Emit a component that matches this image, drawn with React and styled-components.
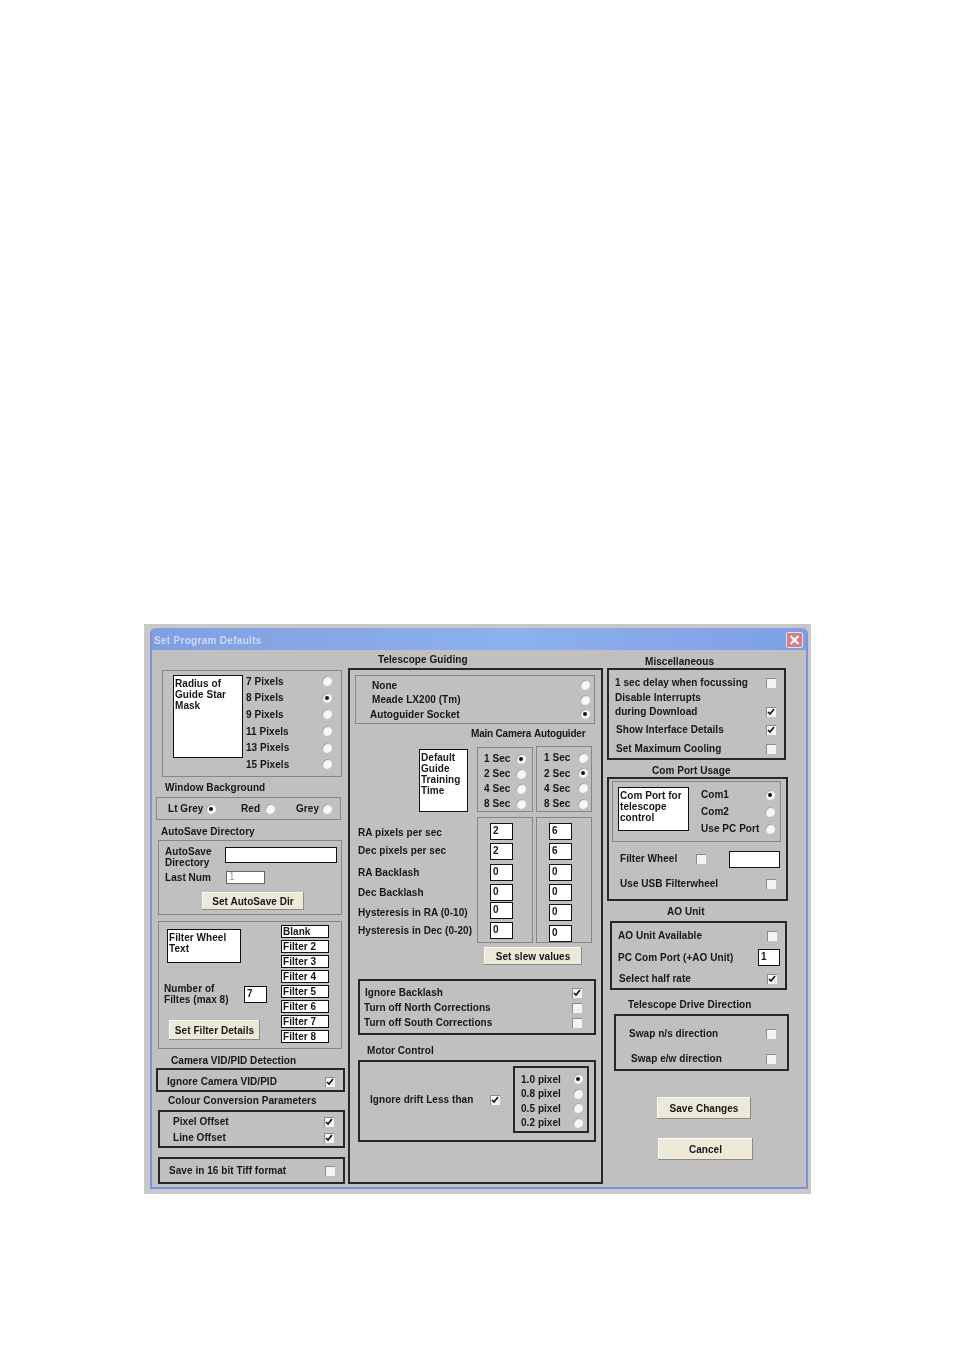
import styled, { createGlobalStyle } from 'styled-components';

const GlobalStyle = createGlobalStyle`
  html, body {
    margin: 0;
    background: #ffffff;
  }
  body {
    font-family: "Liberation Sans", Arial, sans-serif;
    font-size: 10px;
    font-weight: bold;
    letter-spacing: 0.05px;
    color: #161616;
  }
`;

const Page = styled.div`
  padding: 624px 0 157px 144px;
`;

const Window = styled.div`
  width: 667px;
  height: 570px;
  box-sizing: border-box;
  padding: 4px 3px 0 6px;
  background: #c8c8c8;
  filter: blur(0.4px);
`;

const Frame = styled.div`
  width: 658px;
  height: 561px;
  box-sizing: border-box;
  border: 2px solid #7f8fd8;
  border-top: none;
  border-radius: 6px 6px 0 0;
  overflow: hidden;
`;

const TitleBar = styled.div`
  height: 22px;
  display: flex;
  align-items: center;
  justify-content: space-between;
  padding: 2px 3px 0 2px;
  box-sizing: border-box;
  background: linear-gradient(90deg, #7f9fe0, #8fb0ee 55%, #7f9fe4);
  color: #cfd9f2;
  letter-spacing: 0.3px;
`;

const CloseButton = styled.span`
  width: 17px;
  height: 16px;
  display: flex;
  align-items: center;
  justify-content: center;
  background: #cf8088;
  border: 1px solid #e6dfe6;
  border-radius: 2px;
  box-sizing: border-box;
`;

const Body = styled.div`
  height: 537px;
  display: flex;
  padding-left: 4px;
  background: #c0c0c0;
`;

const Column = styled.div`
  width: ${(p) => p.$w}px;
  margin-right: ${(p) => p.$gap || 0}px;
  flex: none;
`;

const Heading = styled.div`
  height: 12px;
  line-height: 14px;
  white-space: nowrap;
  margin: ${(p) => p.$top}px 0 0 ${(p) => p.$left}px;
`;

const Panel = styled.div`
  box-sizing: border-box;
  width: ${(p) => p.$w}px;
  height: ${(p) => p.$h}px;
  margin: ${(p) => p.$top || 0}px 0 0 ${(p) => p.$left || 0}px;
  border: ${(p) => (p.$dark ? '2px solid #262626' : '1px solid #858585')};
  flex: none;
`;

const WhiteBox = styled.div`
  box-sizing: border-box;
  width: ${(p) => p.$w}px;
  height: ${(p) => p.$h}px;
  margin: ${(p) => p.$top || 0}px 0 0 ${(p) => p.$left || 0}px;
  padding: 2px 0 0 1px;
  background: #ffffff;
  border: 1px solid #111111;
  line-height: 11px;
  flex: none;
`;

const Field = styled.div`
  box-sizing: border-box;
  width: ${(p) => p.$w}px;
  height: ${(p) => p.$h}px;
  margin: ${(p) => p.$top || 0}px 0 0 ${(p) => p.$left || 0}px;
  padding-left: 2px;
  background: #ffffff;
  border: 1px solid ${(p) => (p.$soft ? '#666666' : '#111111')};
  color: ${(p) => (p.$soft ? '#9a9a9a' : '#161616')};
  font-weight: ${(p) => (p.$soft ? 'normal' : 'bold')};
  line-height: ${(p) => p.$h - 4}px;
  flex: none;
`;

const Button = styled.button`
  display: block;
  box-sizing: border-box;
  width: ${(p) => p.$w}px;
  height: ${(p) => p.$h}px;
  margin: ${(p) => p.$top || 0}px 0 0 ${(p) => p.$left || 0}px;
  padding: 0;
  background: #ece9d8;
  border: none;
  box-shadow: inset -1px -1px 0 #8a8a80, inset 1px 1px 0 #fbfaf2;
  font: inherit;
  letter-spacing: inherit;
  color: inherit;
`;

const Line = styled.div`
  display: flex;
  align-items: center;
  justify-content: space-between;
  flex: none;
  width: ${(p) => (p.$w ? `${p.$w}px` : 'auto')};
  height: ${(p) => p.$h || 12}px;
  line-height: ${(p) => p.$lh || 12}px;
  white-space: nowrap;
  margin: ${(p) => p.$top || 0}px ${(p) => p.$right || 0}px 0 ${(p) => p.$left || 0}px;
`;

const Text = styled.span`
  margin-left: ${(p) => p.$indent || 0}px;
`;

const RadioCircle = styled.span`
  position: relative;
  display: block;
  width: 10px;
  height: 10px;
  border-radius: 50%;
  flex: none;
  background: #f7f7f7;
  box-shadow: inset 1px 1px 1px #a0a0a0;
  &::after {
    content: '';
    display: ${(p) => (p.$on ? 'block' : 'none')};
    position: absolute;
    left: 3px;
    top: 3px;
    width: 4px;
    height: 4px;
    border-radius: 50%;
    background: #111111;
  }
`;

const CheckSquare = styled.span`
  display: block;
  width: 10px;
  height: 10px;
  flex: none;
  background: #f4f4f4;
  box-shadow: inset 1px 1px 0 #8c8c8c;
`;

function Check({ on }) {
  return (
    <CheckSquare>
      {on && (
        <svg width="10" height="10" viewBox="0 0 10 10">
          <path d="M2 5l2 2 4-5" fill="none" stroke="#111" strokeWidth="1.6" />
        </svg>
      )}
    </CheckSquare>
  );
}

const Row = styled.div`
  display: flex;
  align-items: flex-start;
`;

const RowCenter = styled.div`
  display: flex;
  align-items: center;
  height: ${(p) => p.$h}px;
  padding-left: ${(p) => p.$pad || 0}px;
`;

const SideStack = styled.div`
  width: ${(p) => p.$w}px;
  flex: none;
`;

const RadioList = styled.div`
  display: grid;
  width: ${(p) => p.$w}px;
  grid-auto-rows: ${(p) => p.$pitch}px;
  margin: ${(p) => p.$top || 0}px 0 0 ${(p) => p.$left || 0}px;
  flex: none;
`;

const RadioItem = styled.div`
  display: flex;
  align-items: center;
  justify-content: space-between;
  white-space: nowrap;
`;

const InlineRadio = styled.div`
  display: flex;
  align-items: center;
  justify-content: space-between;
  width: ${(p) => p.$w}px;
  margin-right: ${(p) => p.$gap}px;
`;

const FilterList = styled.div`
  display: grid;
  grid-auto-rows: 13px;
  row-gap: 2px;
  margin-top: 3px;
`;

const FilterName = styled.div`
  box-sizing: border-box;
  width: 48px;
  padding-left: 1px;
  background: #ffffff;
  border: 1px solid #111111;
  line-height: 11px;
`;

const Pair = styled.div`
  display: flex;
  margin-left: ${(p) => p.$left}px;
  gap: ${(p) => p.$gap}px;
  height: 12px;
  line-height: 12px;
  margin-top: 4px;
  letter-spacing: -0.2px;
  white-space: nowrap;
`;

const LabelColumn = styled.div`
  width: 119px;
  margin-left: 8px;
  flex: none;
`;

const radius = ['7 Pixels', '8 Pixels', '9 Pixels', '11 Pixels', '13 Pixels', '15 Pixels'];
const filters = ['Blank', 'Filter 2', 'Filter 3', 'Filter 4', 'Filter 5', 'Filter 6', 'Filter 7', 'Filter 8'];
const secs = ['1 Sec', '2 Sec', '4 Sec', '8 Sec'];
const guideLabels = [
  ['RA pixels per sec', 15],
  ['Dec pixels per sec', 6],
  ['RA Backlash', 10],
  ['Dec Backlash', 8],
  ['Hysteresis in RA (0-10)', 8],
  ['Hysteresis in Dec (0-20)', 6],
];
const mainFields = [['2', 5], ['2', 3], ['0', 4], ['0', 3], ['0', 1], ['0', 3]];
const autoFields = [['6', 5], ['6', 3], ['0', 4], ['0', 3], ['0', 3], ['0', 4]];
const drift = ['1.0 pixel', '0.8 pixel', '0.5 pixel', '0.2 pixel'];

function LeftColumn() {
  return (
    <Column $w={189} $gap={3}>
      <Panel $w={180} $h={107} $top={20} $left={6}>
        <Row>
          <WhiteBox $w={70} $h={83} $top={4} $left={10}>
            Radius of<br />Guide Star<br />Mask
          </WhiteBox>
          <RadioList $w={86} $pitch={16.6} $top={2} $left={3}>
            {radius.map((r, i) => (
              <RadioItem key={r}>
                {r}
                <RadioCircle $on={i === 1} />
              </RadioItem>
            ))}
          </RadioList>
        </Row>
      </Panel>
      <Heading $top={4} $left={9}>Window Background</Heading>
      <Panel $w={185} $h={23} $top={4}>
        <RowCenter $h={21} $pad={11}>
          <InlineRadio $w={48} $gap={25}>Lt Grey <RadioCircle $on /></InlineRadio>
          <InlineRadio $w={34} $gap={21}>Red <RadioCircle /></InlineRadio>
          <InlineRadio $w={36} $gap={0}>Grey <RadioCircle /></InlineRadio>
        </RowCenter>
      </Panel>
      <Heading $top={5} $left={5}>AutoSave Directory</Heading>
      <Panel $w={184} $h={75} $top={3} $left={2}>
        <Row>
          <Line $w={60} $h={22} $lh={11} $left={6} $top={5}>
            <span>AutoSave<br />Directory</span>
          </Line>
          <Field $w={112} $h={16} $top={6} />
        </Row>
        <Row>
          <Line $w={61} $h={13} $left={6} $top={3}>Last Num</Line>
          <Field $soft $w={39} $h={13} $top={3}>1</Field>
        </Row>
        <Button $w={102} $h={18} $top={8} $left={43}>Set AutoSave Dir</Button>
      </Panel>
      <Panel $w={184} $h={128} $top={6} $left={2}>
        <Row>
          <SideStack $w={122}>
            <WhiteBox $w={74} $h={34} $top={7} $left={8}>
              Filter Wheel<br />Text
            </WhiteBox>
            <Row>
              <Line $w={80} $h={22} $lh={11} $left={5} $top={20}>
                <span>Number of<br />Filtes (max 8)</span>
              </Line>
              <Field $w={23} $h={17} $top={23}>7</Field>
            </Row>
            <Button $w={91} $h={20} $top={15} $left={10}>Set Filter Details</Button>
          </SideStack>
          <FilterList>
            {filters.map((f) => <FilterName key={f}>{f}</FilterName>)}
          </FilterList>
        </Row>
      </Panel>
      <Heading $top={5} $left={15}>Camera VID/PID Detection</Heading>
      <Panel $dark $w={189} $h={24} $top={2}>
        <Line $h={20} $top={2} $left={9} $right={8}>Ignore Camera VID/PID <Check on /></Line>
      </Panel>
      <Heading $top={2} $left={12}>Colour Conversion Parameters</Heading>
      <Panel $dark $w={187} $h={38} $top={4} $left={2}>
        <Line $left={13} $right={9} $top={4}>Pixel Offset <Check on /></Line>
        <Line $left={13} $right={9} $top={4}>Line Offset <Check on /></Line>
      </Panel>
      <Panel $dark $w={187} $h={27} $top={9} $left={2}>
        <Line $h={23} $left={9} $right={8}>Save in 16 bit Tiff format <Check /></Line>
      </Panel>
    </Column>
  );
}

function MiddleColumn() {
  return (
    <Column $w={255} $gap={4}>
      <Heading $top={3} $left={30}>Telescope Guiding</Heading>
      <Panel $dark $w={255} $h={516} $top={3}>
        <Panel $w={240} $h={49} $top={5} $left={5}>
          <RadioList $w={234} $pitch={14.5} $top={2}>
            <RadioItem><Text $indent={16}>None</Text><RadioCircle /></RadioItem>
            <RadioItem><Text $indent={16}>Meade LX200 (Tm)</Text><RadioCircle /></RadioItem>
            <RadioItem><Text $indent={14}>Autoguider Socket</Text><RadioCircle $on /></RadioItem>
          </RadioList>
        </Panel>
        <Pair $left={121} $gap={3}><span>Main Camera</span><span>Autoguider</span></Pair>
        <Row>
          <WhiteBox $w={49} $h={63} $top={9} $left={69}>
            Default<br />Guide<br />Training<br />Time
          </WhiteBox>
          <Panel $w={56} $h={65} $top={7} $left={9}>
            <RadioList $w={42} $pitch={15} $top={3} $left={6}>
              {secs.map((s, i) => (
                <RadioItem key={s}>{s}<RadioCircle $on={i === 0} /></RadioItem>
              ))}
            </RadioList>
          </Panel>
          <Panel $w={56} $h={66} $top={6} $left={3}>
            <RadioList $w={44} $pitch={15.4} $top={3} $left={7}>
              {secs.map((s, i) => (
                <RadioItem key={s}>{s}<RadioCircle $on={i === 1} /></RadioItem>
              ))}
            </RadioList>
          </Panel>
        </Row>
        <Row>
          <LabelColumn>
            {guideLabels.map(([l, top]) => (
              <Line key={l} $top={top}>{l}</Line>
            ))}
          </LabelColumn>
          <Panel $w={56} $h={126} $top={5}>
            {mainFields.map(([v, top], i) => (
              <Field key={i} $w={23} $h={17} $top={top} $left={12}>{v}</Field>
            ))}
          </Panel>
          <Panel $w={56} $h={126} $top={5} $left={3}>
            {autoFields.map(([v, top], i) => (
              <Field key={i} $w={23} $h={17} $top={top} $left={12}>{v}</Field>
            ))}
          </Panel>
        </Row>
        <Button $w={98} $h={18} $top={4} $left={134}>Set slew values</Button>
        <Panel $dark $w={238} $h={56} $top={14} $left={8}>
          <Line $top={6} $left={5} $right={12}>Ignore Backlash <Check on /></Line>
          <Line $top={3} $left={4} $right={12}>Turn off North Corrections <Check /></Line>
          <Line $top={3} $left={4} $right={12}>Turn off South Corrections <Check /></Line>
        </Panel>
        <Heading $top={9} $left={17}>Motor Control</Heading>
        <Panel $dark $w={238} $h={82} $top={4} $left={8}>
          <Row>
            <Line $w={120} $h={76} $left={10}>Ignore drift Less than</Line>
            <RowCenter $h={76}><Check on /></RowCenter>
            <Panel $dark $w={76} $h={67} $top={4} $left={13}>
              <RadioList $w={62} $pitch={14.5} $top={4} $left={6}>
                {drift.map((d, i) => (
                  <RadioItem key={d}>{d}<RadioCircle $on={i === 0} /></RadioItem>
                ))}
              </RadioList>
            </Panel>
          </Row>
        </Panel>
      </Panel>
    </Column>
  );
}

function RightColumn() {
  return (
    <Column $w={182}>
      <Heading $top={5} $left={38}>Miscellaneous</Heading>
      <Panel $dark $w={179} $h={92} $top={1}>
        <Line $top={7} $left={6} $right={8}>1 sec delay when focussing <Check /></Line>
        <Line $top={3} $left={6} $right={8}>Disable Interrupts</Line>
        <Line $top={2} $left={6} $right={8}>during Download <Check on /></Line>
        <Line $top={6} $left={7} $right={8}>Show Interface Details <Check on /></Line>
        <Line $top={7} $left={7} $right={8}>Set Maximum Cooling <Check /></Line>
      </Panel>
      <Heading $top={4} $left={45}>Com Port Usage</Heading>
      <Panel $dark $w={181} $h={124} $top={1}>
        <Panel $w={169} $h={61} $top={2} $left={3}>
          <Row>
            <WhiteBox $w={71} $h={44} $top={5} $left={5}>
              Com Port for<br />telescope<br />control
            </WhiteBox>
            <RadioList $w={74} $pitch={17} $top={4} $left={12}>
              <RadioItem>Com1 <RadioCircle $on /></RadioItem>
              <RadioItem>Com2 <RadioCircle /></RadioItem>
              <RadioItem>Use PC Port <RadioCircle /></RadioItem>
            </RadioList>
          </Row>
        </Panel>
        <RowCenter $h={34} $pad={11}>
          <Line $w={76}>Filter Wheel</Line>
          <Check />
          <Field $w={51} $h={17} $left={23} />
        </RowCenter>
        <Line $top={2} $left={11} $right={10}>Use USB Filterwheel <Check /></Line>
      </Panel>
      <Heading $top={4} $left={60}>AO Unit</Heading>
      <Panel $dark $w={177} $h={69} $top={4} $left={3}>
        <Line $top={7} $left={6} $right={8}>AO Unit Available <Check /></Line>
        <Line $h={17} $top={7} $left={6} $right={5}>
          PC Com Port (+AO Unit)
          <Field $w={22} $h={17}>1</Field>
        </Line>
        <Line $top={7} $left={7} $right={8}>Select half rate <Check on /></Line>
      </Panel>
      <Heading $top={8} $left={21}>Telescope Drive Direction</Heading>
      <Panel $dark $w={175} $h={57} $top={4} $left={7}>
        <Line $top={12} $left={13} $right={11}>Swap n/s direction <Check /></Line>
        <Line $top={13} $left={15} $right={11}>Swap e/w direction <Check /></Line>
      </Panel>
      <Button $w={94} $h={22} $top={26} $left={50}>Save Changes</Button>
      <Button $w={95} $h={22} $top={19} $left={51}>Cancel</Button>
    </Column>
  );
}

export default function App() {
  return (
    <Page>
      <GlobalStyle />
      <Window>
        <Frame>
          <TitleBar>
            Set Program Defaults
            <CloseButton>
              <svg width="11" height="10" viewBox="0 0 11 10">
                <path d="M1.5 1l8 8M9.5 1l-8 8" stroke="#fff" strokeWidth="2" />
              </svg>
            </CloseButton>
          </TitleBar>
          <Body>
            <LeftColumn />
            <MiddleColumn />
            <RightColumn />
          </Body>
        </Frame>
      </Window>
    </Page>
  );
}
